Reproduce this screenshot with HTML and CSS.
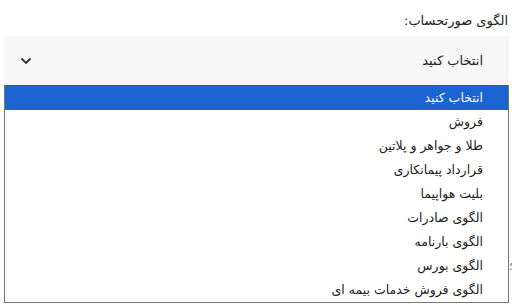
FILE: index.html
```html
<!DOCTYPE html>
<html lang="fa" dir="rtl">
<head>
<meta charset="utf-8">
<link rel="stylesheet" href="styles.css">
</head>
<body>
<div class="page">
  <div class="label">الگوی صورتحساب:</div>
  <div class="field">
    <div class="select">
      <span class="value">انتخاب کنید</span>
      <svg class="chev" width="12" height="8" viewBox="0 0 12 8"><path d="M1.5 1.5 L6 6 L10.5 1.5" fill="none" stroke="#333" stroke-width="1.8"/></svg>
    </div>
    <div class="list">
      <div class="opt active">انتخاب کنید</div>
      <div class="opt">فروش</div>
      <div class="opt">طلا و جواهر و پلاتین</div>
      <div class="opt">قرارداد پیمانکاری</div>
      <div class="opt">بلیت هواپیما</div>
      <div class="opt">الگوی صادرات</div>
      <div class="opt">الگوی بارنامه</div>
      <div class="opt">الگوی بورس</div>
      <div class="opt">الگوی فروش خدمات بیمه ای</div>
    </div>
    <span class="peek">؛</span>
  </div>
</div>
</body>
</html>
```
FILE: styles.css
```css
html, body {
  margin: 0;
  padding: 0;
  background: #fff;
}
.page {
  font-family: "DejaVu Sans", sans-serif;
  color: #222;
  padding: 12px 5px 0 4px;
  display: flex;
  flex-direction: column;
}
.label {
  font-size: 13px;
  line-height: 18px;
  padding-right: 1px;
  margin-bottom: 6px;
}
.field {
  position: relative;
  display: flex;
  flex-direction: column;
}
.select {
  height: 49px;
  background: #f7f7f7;
  display: flex;
  align-items: center;
  justify-content: space-between;
  padding: 0 26px 0 16px;
}
.value {
  font-size: 13px;
}
.chev {
  display: block;
}
.list {
  background: #fff;
  border: 1px solid #767676;
  border-top: none;
  display: flex;
  flex-direction: column;
}
.opt {
  font-size: 12.5px;
  height: 24px;
  line-height: 24px;
  padding-right: 25px;
}
.opt.active {
  background: #1a63d1;
  color: #fff;
  height: 25px;
  line-height: 25px;
}
.peek {
  position: absolute;
  left: 100%;
  top: 224px;
  font-size: 11px;
  color: #555;
}
```
